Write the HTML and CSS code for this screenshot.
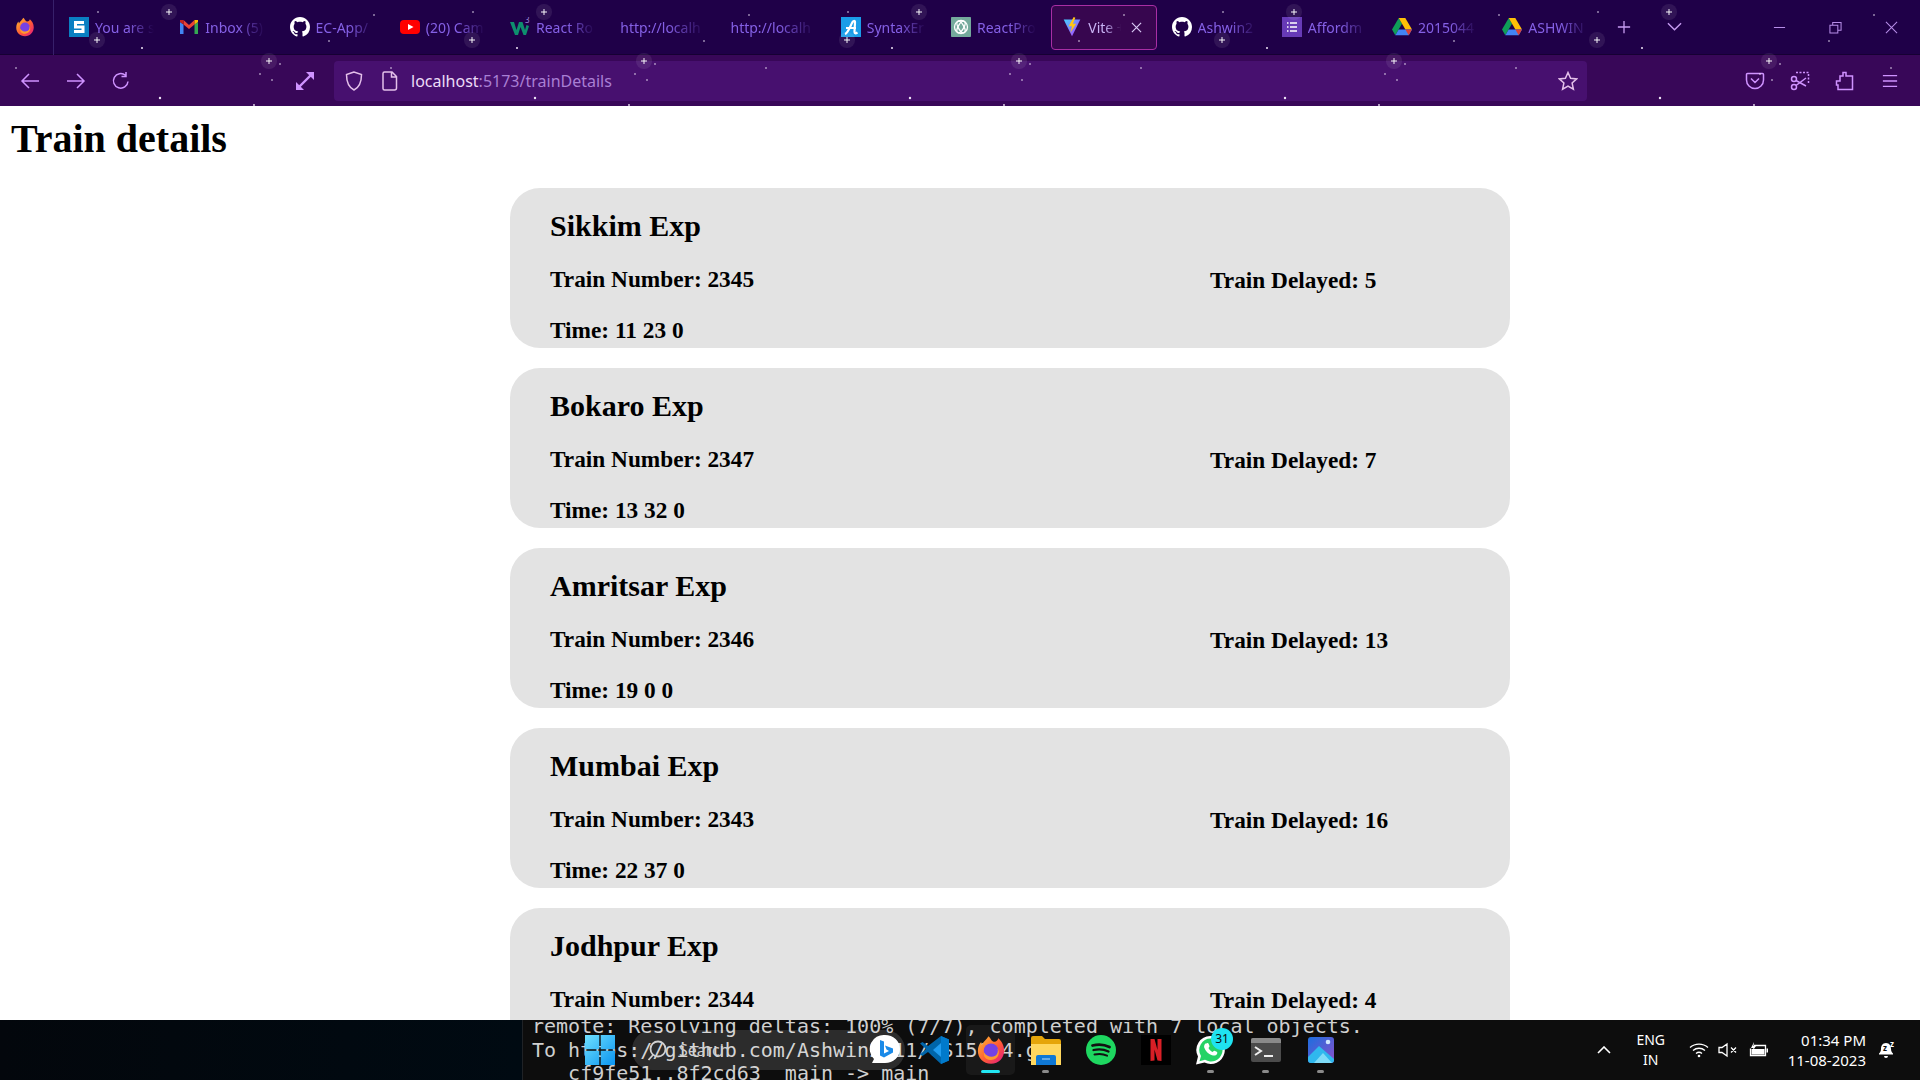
FILE: index.html
```html
<!DOCTYPE html>
<html lang="en">
<head>
<meta charset="utf-8">
<title>Vite + React</title>
<link rel="stylesheet" href="styles.css">
</head>
<body>
<svg class="defs" width="0" height="0" aria-hidden="true">
  <defs>
    <symbol id="gh" viewBox="0 0 16 16"><path fill="#fff" d="M8 0C3.58 0 0 3.58 0 8c0 3.54 2.29 6.53 5.47 7.59.4.07.55-.17.55-.38 0-.19-.01-.82-.01-1.49-2.01.37-2.53-.49-2.69-.94-.09-.23-.48-.94-.82-1.13-.28-.15-.68-.52-.01-.53.63-.01 1.08.58 1.23.82.72 1.21 1.87.87 2.33.66.07-.52.28-.87.51-1.07-1.78-.2-3.64-.89-3.64-3.95 0-.87.31-1.59.82-2.15-.08-.2-.36-1.02.08-2.12 0 0 .67-.21 2.2.82.64-.18 1.32-.27 2-.27.68 0 1.36.09 2 .27 1.53-1.04 2.2-.82 2.2-.82.44 1.1.16 1.92.08 2.12.51.56.82 1.27.82 2.15 0 3.07-1.87 3.75-3.65 3.95.29.25.54.73.54 1.48 0 1.07-.01 1.93-.01 2.2 0 .21.15.46.55.38A8.013 8.013 0 0016 8c0-4.42-3.58-8-8-8z"/></symbol>
    <symbol id="drive" viewBox="0 0 20 18"><path fill="#0f9d58" d="M6.700 0 0 11.500l3.300 5.700L10 5.700z"/><path fill="#ffc107" d="M6.700 0h6.600L20 11.500h-6.600z"/><path fill="#4285f4" d="M3.300 17.200h13.400l3.300-5.700H6.700z"/><path fill="#db4437" d="M13.400 11.500H20l-3.300 5.700z"/></symbol>
    <symbol id="fx" viewBox="0 0 24 24"><defs><linearGradient id="fxg" x1="0" y1="0" x2="1" y2="1"><stop offset="0" stop-color="#ffbd2e"/><stop offset=".55" stop-color="#ff5a36"/><stop offset="1" stop-color="#e31587"/></linearGradient></defs><path fill="url(#fxg)" d="M12 23C5.800 23 1.500 18.300 1.500 12.800c0-3 1-5.600 2.600-7.300l.6 2.400C6 5 8.500 3.900 10 1c2 1.500 1.800 3.300 3.600 4.100 2.300 1 4-1 4.200-2.500 2.400 2 4.700 5.500 4.700 9.700C22.500 18.300 18.200 23 12 23z"/><circle cx="12" cy="12.500" r="5.800" fill="#7542e5"/><path fill="#ff9a2e" d="M6.500 14c1.500 3 6 4.500 9 2.500 2-1.300 2.500-4 1.500-6 2.500 2.500 1.500 9-5 9.500-4 .3-6.500-3-5.500-6z"/></symbol>
    <pattern id="stars" width="375" height="106" patternUnits="userSpaceOnUse">
      <g fill="#fff" fill-opacity=".08">
        <circle cx="169" cy="12" r="8"/><circle cx="97" cy="40" r="8"/><circle cx="269" cy="61" r="8"/>
      </g>
      <g stroke="#fff" stroke-opacity=".95" stroke-width="1">
        <path d="M166 12h6M169 9v6M94 40h6M97 37v6M266 61h6M269 58v6"/>
      </g>
      <g fill="#efe6f7">
        <circle cx="98" cy="12" r=".8"/><circle cx="374" cy="15" r=".8"/><circle cx="142" cy="48" r="1"/><circle cx="329" cy="41" r=".8"/><circle cx="16" cy="68" r=".8"/><circle cx="280" cy="64" r=".8"/><circle cx="260" cy="74" r=".8"/><circle cx="272" cy="80" r=".8"/><circle cx="160" cy="98" r="1.200"/><circle cx="254" cy="105" r=".9"/>
      </g>
    </pattern>
  </defs>
</svg>

<header class="chrome">
  <div class="tabbar">
    <div class="fx-slot"><svg class="ic20" viewBox="0 0 24 24"><use href="#fx"/></svg></div>
    <div class="tab"><svg class="ic20" viewBox="0 2 20 20"><rect width="20" height="24" fill="#0a7fc2"/><path fill="none" stroke="#fff" stroke-width="3" d="M15 7.500H6.500V12h7.500v4.500H5"/></svg><span class="label">You are s</span></div>
    <div class="tab"><svg class="ic20" viewBox="0 0 20 20"><path fill="#4285f4" d="M1 17V5l3.500 2.500V17z"/><path fill="#34a853" d="M15.500 17V7.500L19 5v12z"/><path fill="#ea4335" d="M4.500 7.500V3L10 8l5.500-5v4.500L10 12z"/><path fill="#fbbc04" d="M15.500 3 19 3v2l-3.500 2.500z"/><path fill="#c5221f" d="M1 3h3.500v4.500L1 5z"/></svg><span class="label">Inbox (5)</span></div>
    <div class="tab"><svg class="ic20"><use href="#gh"/></svg><span class="label">EC-App/</span></div>
    <div class="tab"><svg class="ic20" viewBox="0 0 20 20"><rect y="3" width="20" height="14" rx="4" fill="#f00"/><path fill="#fff" d="m8 7 5.500 3L8 13z"/></svg><span class="label">(20) Cam</span></div>
    <div class="tab"><svg class="ic20" viewBox="0 0 20 20"><path fill="#0e8f6e" d="M0 5h4l2.500 8L9 5h3.500l2.500 8 1.500-5 2.500 1-3 9h-2.500L10.500 10 8 18H5z"/><text x="15" y="6" class="sup">3</text></svg><span class="label">React Ro</span></div>
    <div class="tab"><span class="label">http://localh</span></div>
    <div class="tab"><span class="label">http://localh</span></div>
    <div class="tab"><svg class="ic20" viewBox="0 2 20 20"><rect width="20" height="24" rx="2" fill="#1a9de8"/><path fill="none" stroke="#fff" stroke-width="2.200" d="M4 19c3-1 5-7 7-11 1-2.500 3-2.500 3-1 0 3-.5 7-.5 10 0 2 1.500 1.500 3 .5M5 13h10"/></svg><span class="label">SyntaxEr</span></div>
    <div class="tab"><svg class="ic20" viewBox="0 2 20 20"><rect width="20" height="24" rx="4" fill="#74aa9c"/><g fill="none" stroke="#fff" stroke-width="1.300"><circle cx="10" cy="12" r="6.500"/><ellipse cx="10" cy="12" rx="6.500" ry="2.800" transform="rotate(60 10 12)"/><ellipse cx="10" cy="12" rx="6.500" ry="2.800" transform="rotate(-60 10 12)"/></g></svg><span class="label">ReactPro</span></div>
    <div class="tab active"><svg class="ic20 vite" viewBox="0 0 20 24"><defs><linearGradient id="vg" x1="0" y1="0" x2="1" y2="1"><stop offset="0" stop-color="#41d1ff"/><stop offset="1" stop-color="#bd34fe"/></linearGradient></defs><path fill="url(#vg)" d="M0 3h20L10 23z"/><path fill="#ffc517" d="M12 0 6 11h4l-2 8 7-11h-4l3-7z"/></svg><span class="label vite-label">Vite + R</span><svg class="tab-close" viewBox="0 0 12 12"><path d="m1 1 10 10M11 1 1 11"/></svg></div>
    <div class="tab"><svg class="ic20"><use href="#gh"/></svg><span class="label">Ashwin2</span></div>
    <div class="tab"><svg class="ic20" viewBox="0 2 20 20"><rect width="20" height="24" fill="#673ab7"/><path stroke="#fff" stroke-width="1.600" d="M5 8h1.500M8 8h7M5 12h1.500M8 12h7M5 16h1.500M8 16h7"/></svg><span class="label">Affordm</span></div>
    <div class="tab"><svg class="ic20"><use href="#drive"/></svg><span class="label">2015044</span></div>
    <div class="tab"><svg class="ic20"><use href="#drive"/></svg><span class="label">ASHWIN</span></div>
    <svg class="tab-plus" viewBox="0 0 16 16"><path d="M8 1v14M1 8h14"/></svg>
    <svg class="tab-list" viewBox="0 0 16 10"><path d="m1 1 7 7 7-7"/></svg>
    <div class="win-controls">
      <svg viewBox="0 0 14 14"><path d="M1 7h12"/></svg>
      <svg viewBox="0 0 14 14"><path d="M1 4.500h8.500V13H1zM4 4.500V1.500h9V10h-3.500"/></svg>
      <svg viewBox="0 0 14 14"><path d="m1 1 12 12M13 1 1 13"/></svg>
    </div>
  </div>
  <nav class="navbar">
    <svg class="nav-ic back" viewBox="0 0 20 20"><path d="M19 10H2M9 3l-7 7 7 7"/></svg>
    <svg class="nav-ic fwd" viewBox="0 0 20 20"><path d="M1 10h17M11 3l7 7-7 7"/></svg>
    <svg class="nav-ic reload" viewBox="0 0 20 20"><path d="M17 10.500A7.300 7.300 0 1 1 14.500 4.300M15 1v4.500h-4.500"/></svg>
    <svg class="nav-ic expand" viewBox="0 0 20 20"><path stroke-width="2.400" d="m4 16 12-12"/><path class="solid" d="M11 1h8v8zM1 11v8h8z"/></svg>
    <div class="urlbar">
      <svg class="url-ic shield" viewBox="0 0 18 20"><path d="M9 1 1.500 3.500C1.500 11 3 16 9 19c6-3 7.500-8 7.500-15.500z"/></svg>
      <svg class="url-ic doc" viewBox="0 0 16 20"><path d="M2.500 1H10l4.500 4.500V17a2 2 0 0 1-2 2h-10A1.500 1.500 0 0 1 1 17.500v-15A1.500 1.500 0 0 1 2.500 1zM9.500 1v5h5"/></svg>
      <span class="url"><span class="host">localhost</span>:5173/trainDetails</span>
      <svg class="url-ic star" viewBox="0 0 20 20"><path d="m10 1.500 2.600 5.700 6 .7-4.500 4.100 1.300 6.200L10 15.100l-5.400 3.100 1.300-6.200L1.400 7.900l6-.7z"/></svg>
    </div>
    <svg class="nav-ic pocket" viewBox="0 0 20 20"><path d="M2.500 2.500h15a1 1 0 0 1 1 1V9a8.500 8.500 0 0 1-17 0V3.500a1 1 0 0 1 1-1zM6 7.500l4 4 4-4"/></svg>
    <svg class="nav-ic shot" viewBox="0 0 20 20"><path stroke-dasharray="2 1.500" d="M6 1.500h12.500V12"/><circle cx="4" cy="8" r="2.500"/><circle cx="4" cy="16" r="2.500"/><path d="M6 9.500 16 15M6 14.500 16 7"/></svg>
    <svg class="nav-ic ext" viewBox="0 0 20 20"><path d="M8 1.500h3v3.500h6.500v13.500H3V14h-1.500v-4H5V5h3z"/></svg>
    <svg class="nav-ic menu" viewBox="0 0 18 18"><path d="M1 3h16M1 9h16M1 15h16"/></svg>
  </nav>
  <svg class="star-layer" aria-hidden="true"><rect width="100%" height="100%" fill="url(#stars)"/></svg>
</header>

<main class="content">
  <h1 class="page-title">Train details</h1>
  <div class="train-list">
    <article class="card">
      <h2 class="train-name">Sikkim Exp</h2>
      <div class="card-grid">
        <div><p class="info">Train Number: 2345</p><p class="info">Time: 11 23 0</p></div>
        <p class="info delayed">Train Delayed: 5</p>
      </div>
    </article>
    <article class="card">
      <h2 class="train-name">Bokaro Exp</h2>
      <div class="card-grid">
        <div><p class="info">Train Number: 2347</p><p class="info">Time: 13 32 0</p></div>
        <p class="info delayed">Train Delayed: 7</p>
      </div>
    </article>
    <article class="card">
      <h2 class="train-name">Amritsar Exp</h2>
      <div class="card-grid">
        <div><p class="info">Train Number: 2346</p><p class="info">Time: 19 0 0</p></div>
        <p class="info delayed">Train Delayed: 13</p>
      </div>
    </article>
    <article class="card">
      <h2 class="train-name">Mumbai Exp</h2>
      <div class="card-grid">
        <div><p class="info">Train Number: 2343</p><p class="info">Time: 22 37 0</p></div>
        <p class="info delayed">Train Delayed: 16</p>
      </div>
    </article>
    <article class="card">
      <h2 class="train-name">Jodhpur Exp</h2>
      <div class="card-grid">
        <div><p class="info">Train Number: 2344</p><p class="info">Time: 8 15 0</p></div>
        <p class="info delayed">Train Delayed: 4</p>
      </div>
    </article>
  </div>
</main>

<footer class="taskbar">
  <div class="wallpaper"></div>
  <pre class="terminal">remote: Resolving deltas: 100% (7/7), completed with 7 local objects.
To https://github.com/Ashwin2011/CS15044.git
   cf9fe51..8f2cd63  main -&gt; main</pre>
  <div class="tile win"><svg class="tb-ic" viewBox="0 0 30 30"><defs><linearGradient id="wg" x1="0" y1="0" x2="1" y2="1"><stop offset="0" stop-color="#6fe0ff"/><stop offset="1" stop-color="#0a94f0"/></linearGradient></defs><path fill="url(#wg)" d="M0 0h14.300v14.300H0zM15.700 0H30v14.300H15.700zM0 15.700h14.300V30H0zM15.700 15.700H30V30H15.700z"/></svg></div>
  <div class="search">
    <svg class="search-ic" viewBox="0 0 22 22"><circle cx="11" cy="10" r="7.500"/><path d="M6 16 1.500 21"/></svg>
    <span class="search-text">Search</span>
    <svg class="bing" viewBox="0 0 32 32"><path fill="#fff" d="M16 1a15 14 0 0 1 0 28H3l2-4A14 14 0 0 1 16 1z"/><path fill="#1a8ae8" d="M11 6l4 1.500v12l5-2.500-2.500-1.500-1.500-4 8 3v4l-9 5-4-2z"/></svg>
  </div>
  <div class="tile code"><svg class="tb-ic" viewBox="0 0 30 30"><path fill="#0065a9" d="M22 1 30 4.500v21L22 29 9 17l-5.500 4L1 19.500l6-5.500-6-5.500L3.500 7 9 11z"/><path fill="#007acc" d="M22 1 30 4.500v21L22 29z"/><path fill="#1f9cf0" d="M22 8v14l-8-7z"/></svg></div>
  <div class="tile running"><svg class="tb-ic" viewBox="0 0 24 24"><use href="#fx"/></svg></div>
  <div class="tile dot"><svg class="tb-ic" viewBox="0 0 30 30"><path fill="#e5a50a" d="M0 3a2 2 0 0 1 2-2h9l3 3h14a2 2 0 0 1 2 2v24H0z"/><path fill="#ffd75e" d="M0 9h30v21H0z"/><path fill="#0f78d4" d="M5 22a2 2 0 0 1 2-2h16a2 2 0 0 1 2 2v8H5z"/><path stroke="#b9dcf8" d="M11 24h8"/></svg></div>
  <div class="tile"><svg class="tb-ic" viewBox="0 0 30 30"><circle cx="15" cy="15" r="15" fill="#1ed760"/><g fill="none" stroke="#121212" stroke-linecap="round"><path stroke-width="2.800" d="M6.500 10.500c5.500-1.500 12-1 17 1.500"/><path stroke-width="2.300" d="M7.500 15c5-1.200 10.500-.8 15 1.500"/><path stroke-width="2" d="M8.500 19.500c4.500-1 9-.6 12.500 1.200"/></g></svg></div>
  <div class="tile"><svg class="tb-ic" viewBox="0 0 30 30"><rect width="30" height="30" fill="#000"/><path fill="#d81f26" d="M9.500 4h4l3 11V4h4v22l-4-.5-3-11v11l-4 .5z"/></svg></div>
  <div class="tile dot wa"><svg class="tb-ic" viewBox="0 0 30 30"><path fill="#fff" d="M15 1a14 14 0 1 1-6.500 26.500L0 29.500l2-8A14 14 0 0 1 15 1z"/><path fill="#25d366" d="M15 3.500a11.500 11.500 0 1 1-6 21.300l-5.500 1.500L5 21A11.500 11.500 0 0 1 15 3.500z"/><path fill="#fff" d="M10.500 8.500c1-.8 1.800-.5 2.200.5l.8 2c.2.500-.6 1.500-1 2 .8 1.800 2.200 3.200 4 4 .5-.5 1.500-1.500 2-1.300l2.200 1c.8.500.8 1.200.3 2.200-1 1.800-3 2-5 1.300-4-1.500-6.500-4-7.800-7.700-.4-1.500.3-3 1.300-4z"/></svg><span class="badge">31</span></div>
  <div class="tile dot"><svg class="tb-ic" viewBox="0 0 30 26"><rect width="30" height="24" y="1" rx="2" fill="#4b4b4b"/><path fill="#8a8a8a" d="M2 1h26a2 2 0 0 1 2 2v3H0V3a2 2 0 0 1 2-2z"/><path fill="none" stroke="#eee" stroke-width="2" d="m4 10 6 4-6 4"/><path stroke="#eee" stroke-width="2" d="M13 19h9"/></svg></div>
  <div class="tile dot"><svg class="tb-ic photos" viewBox="0 0 26 26"><defs><linearGradient id="pg" x1="0" y1="0" x2="1" y2="1"><stop offset="0" stop-color="#1b6ee0"/><stop offset="1" stop-color="#8c4fc9"/></linearGradient></defs><rect width="26" height="26" rx="3" fill="url(#pg)"/><circle cx="20" cy="5" r="2.300" fill="#cfe7ff"/><path fill="#2fb8ee" d="M0 20 11 9l15 13v1a3 3 0 0 1-3 3H3a3 3 0 0 1-3-3z"/><path fill="#7fdcf8" d="M6 26 15 16l9 10z"/></svg></div>

  <div class="tray">
    <svg class="tray-chevron" viewBox="0 0 14 8"><path d="m1 7 6-6 6 6"/></svg>
    <div class="lang"><span>ENG</span><span>IN</span></div>
    <svg class="tray-ic wifi" viewBox="0 0 20 16"><path d="M1 5.500c5-4.500 13-4.500 18 0M4 8.500c3.500-3 8.500-3 12 0M7 11.500c1.800-1.500 4.200-1.500 6 0"/><circle class="fill" cx="10" cy="14" r="1.300"/></svg>
    <svg class="tray-ic mute" viewBox="0 0 20 16"><path d="M1 5.500h3L9 2v12l-5-3.500H1zM13 5.500l5 5M18 5.500l-5 5"/></svg>
    <svg class="tray-ic batt" viewBox="0 0 20 16"><path d="M5 3.500h11.500v10H1.500V6.500"/><rect class="fill" x="2.500" y="7" width="13" height="5.500"/><path class="fill" d="M17.500 6.500h1.500v4h-1.500zM5 0 2 6h2.500L3.500 9 7 4H4.500z"/></svg>
    <div class="clock"><span>01:34 PM</span><span>11-08-2023</span></div>
    <svg class="bell" viewBox="0 0 18 18"><path fill="#fff" d="M8 2c3.500 0 5 3 5 6 0 2 1 3.500 2 4.500v1H1v-1c1-1 2-2.500 2-4.500 0-3 1.500-6 5-6zM6 15h4a2 2 0 0 1-4 0z"/><text x="5" y="10" class="zz">z</text><text x="12" y="6" class="zz zz-w">z</text></svg>
  </div>
</footer>
</body>
</html>
```
FILE: styles.css
```css
* { box-sizing: border-box; }
html, body { margin: 0; height: 100%; }
body {
  display: flex;
  flex-direction: column;
  height: 100vh;
  overflow: hidden;
  background: #fff;
  color: #000;
  font-family: "Liberation Serif", "Times New Roman", serif;
}
.defs { position: absolute; }

/* Browser chrome */
.chrome { position: relative; flex: none; height: 106px; font-family: "Noto Sans", "Open Sans", sans-serif; }
.star-layer { position: absolute; inset: 0; width: 100%; height: 100%; pointer-events: none; }
.tabbar { display: flex; align-items: center; height: 55px; background: #1f0048; border-bottom: 1px solid #160033; }
.fx-slot { width: 54px; height: 55px; flex: none; display: flex; align-items: center; padding-left: 15px; border-right: 1px solid #37206a; margin-right: 4px; }
.ic20 { width: 20px; height: 20px; flex: none; }
.tab { width: 110.25px; height: 45px; flex: none; display: flex; align-items: center; gap: 6px; padding-left: 11px; position: relative; }
.label {
  flex: 1;
  min-width: 0;
  margin-right: 14px;
  font-size: 14px;
  white-space: nowrap;
  overflow: hidden;
  color: #8560e6;
  -webkit-mask-image: linear-gradient(to right, #000 55%, transparent 100%);
  mask-image: linear-gradient(to right, #000 55%, transparent 100%);
}
.tab.active::before { content: ""; position: absolute; inset: 0 4px 0 1px; background: #37064f; border: 1px solid #a82ea4; border-radius: 4px; }
.tab.active > * { position: relative; }
.vite { margin-left: 1px; }
.vite-label { color: #c9b3f5; margin-right: 0; -webkit-mask-image: linear-gradient(to right, #000 45%, transparent 90%); mask-image: linear-gradient(to right, #000 45%, transparent 90%); }
.tab-close { width: 11px; height: 11px; flex: none; margin-right: 19px; fill: none; stroke: #d9c9f5; stroke-width: 1.300; }
.sup { font-size: 8px; fill: #9a85d8; font-family: "Noto Sans", sans-serif; }
.tab-plus { width: 14px; height: 14px; margin-left: 15px; fill: none; stroke: #c79bf2; stroke-width: 1.500; flex: none; }
.tab-list { width: 15px; height: 10px; margin-left: 36px; fill: none; stroke: #c79bf2; stroke-width: 1.500; flex: none; }
.win-controls { display: flex; align-items: center; gap: 43px; margin-left: auto; padding-right: 22px; }
.win-controls svg { width: 13px; height: 13px; fill: none; stroke: #b78de8; stroke-width: 1.100; }

.navbar { display: flex; align-items: center; height: 51px; background: #380758; }
.nav-ic { flex: none; width: 20px; height: 20px; fill: none; stroke: #cf93ff; stroke-width: 1.500; }
.nav-ic .solid { fill: #cf93ff; stroke: none; }
.back { margin-left: 20px; }
.fwd { margin-left: 26px; }
.reload { margin-left: 25px; }
.expand { margin-left: 164px; stroke-width: 2.400; }
.urlbar { display: flex; align-items: center; width: 1253px; height: 40px; margin-left: 19px; background: #47106f; border-radius: 4px; flex: none; }
.url-ic { flex: none; fill: none; stroke: #e4c0ea; stroke-width: 1.500; }
.shield { width: 18px; height: 20px; margin-left: 11px; }
.doc { width: 16px; height: 20px; margin-left: 19px; }
.url { margin-left: 13px; font-size: 16px; color: #a97fd4; flex: 1; }
.host { color: #ecdcf7; }
.star { width: 20px; height: 20px; margin-right: 9px; }
.pocket { margin-left: 158px; }
.shot { margin-left: 25px; }
.ext { margin-left: 25px; }
.menu { width: 16px; height: 16px; margin-left: 27px; }

/* Page */
.content { flex: 1; min-height: 0; overflow: hidden; background: #fff; }
.page-title { margin: 10px 0 0 11px; font-size: 40px; line-height: 46px; font-weight: 700; }
.train-list { display: flex; flex-direction: column; align-items: center; gap: 20px; margin-top: 26px; padding-left: 100px; }
.card { flex: none; width: 1000px; height: 160px; padding: 21px 40px 0; background: #e3e3e3; border-radius: 30px; overflow: hidden; }
.train-name { margin: 0 0 23px; font-size: 30px; line-height: 34px; font-weight: 700; }
.card-grid { display: grid; grid-template-columns: 660px 1fr; }
.info { margin: 0 0 24px; font-size: 23.300px; line-height: 27px; font-weight: 700; }
.delayed { margin-top: 1px; }

/* Taskbar */
.taskbar { position: relative; flex: none; height: 60px; display: flex; align-items: center; padding-left: 572px; background: #0d0d0d; overflow: hidden; font-family: "Noto Sans", "Open Sans", sans-serif; }
.wallpaper { position: absolute; left: 0; top: 0; bottom: 0; width: 523px; background: linear-gradient(to right, #03070c, #000a12); border-right: 1px solid #1f2226; }
.terminal { position: absolute; left: 532px; top: -5px; margin: 0; font-family: "DejaVu Sans Mono", monospace; font-size: 20px; line-height: 23.500px; color: #cfcfcf; }
.tile { position: relative; flex: none; width: 55px; height: 60px; display: flex; align-items: center; justify-content: center; }
.tb-ic { width: 30px; height: 30px; }
.tb-ic.photos { width: 26px; height: 26px; }
.code .tb-ic { margin-left: -3px; }
.tile.dot::after { content: ""; position: absolute; left: 24px; bottom: 7px; width: 7px; height: 3px; border-radius: 2px; background: #8a8a8a; }
.tile.running::before { content: ""; position: absolute; left: 3px; right: 3px; top: 5px; bottom: 5px; border-radius: 5px; background: rgba(255,255,255,.05); }
.tile.running::after { content: ""; position: absolute; left: 18px; width: 19px; bottom: 7px; height: 3px; border-radius: 2px; background: #22e6f2; }
.tile.running .tb-ic { position: relative; }
.search { position: relative; flex: none; display: flex; align-items: center; width: 273px; height: 40px; margin: 0 3px 0 5px; border-radius: 20px; background: rgba(255,255,255,.13); }
.search-ic { width: 22px; height: 22px; margin-left: 15px; fill: none; stroke: #d0d0d0; stroke-width: 1.800; flex: none; }
.search-text { margin-left: 10px; font-size: 16px; color: #cfcfcf; }
.bing { width: 32px; height: 32px; margin-left: auto; margin-right: 4px; flex: none; }
.badge { position: absolute; left: 28px; top: 8px; width: 22px; height: 22px; border-radius: 50%; background: #1fe3f0; color: #0d0d0d; font-size: 12px; line-height: 22px; text-align: center; }
.tray { margin-left: auto; display: flex; align-items: center; color: #fff; font-size: 14px; line-height: 20px; padding-right: 24px; }
.tray-chevron { width: 14px; height: 8px; fill: none; stroke: #fff; stroke-width: 1.600; flex: none; }
.lang { display: flex; flex-direction: column; align-items: center; margin-left: 23px; width: 34px; }
.tray-ic { width: 20px; height: 16px; fill: none; stroke: #fff; stroke-width: 1.300; flex: none; }
.tray-ic .fill { fill: #fff; stroke: none; }
.wifi { margin-left: 21px; }
.mute { margin-left: 9px; }
.batt { margin-left: 11px; }
.clock { display: flex; flex-direction: column; align-items: flex-end; margin-left: 19px; font-size: 15px; }
.bell { width: 18px; height: 18px; margin-left: 12px; flex: none; }
.zz { font: 700 8px "Noto Sans", sans-serif; fill: #0d0d0d; }
.zz-w { fill: #fff; }
```
